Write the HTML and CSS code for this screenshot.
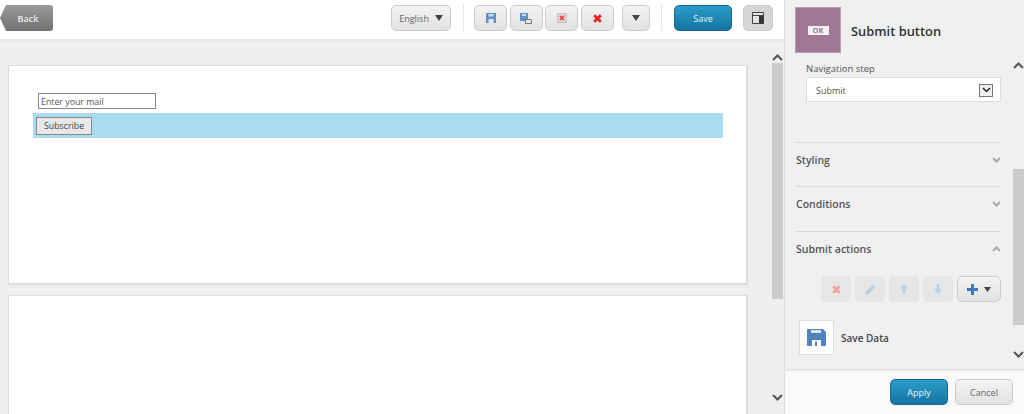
FILE: index.html
```html
<!DOCTYPE html>
<html lang="en">
<head>
<meta charset="utf-8">
<title>Submit button</title>
<link rel="stylesheet" href="styles.css">
</head>
<body>
<div class="app">
  <main class="main">
    <header class="toolbar">
      <button class="back">Back</button>
      <div class="tools">
        <button class="btn lang">English <svg class="caret" width="8" height="6" viewBox="0 0 8 6"><path d="M0 0h8L4 6z" fill="#444"/></svg></button>
        <span class="sep sep-a"></span>
        <div class="group">
          <button class="btn icon w33"><svg width="10" height="10" viewBox="0 0 10 10"><path d="M0 0h10v10H0z" fill="#5f90c8"/><path d="M2.500 1h5v2.500h-5z" fill="#cfdcea"/><path d="M2.500 6h5v4h-5z" fill="#e4e8ec"/></svg></button>
          <button class="btn icon w33"><svg width="12" height="11" viewBox="0 0 12 11"><path d="M0 0h8v8H0z" fill="#5f90c8"/><path d="M2 1h4v2H2z" fill="#cfdcea"/><path d="M5.500 6.500h6v4h-6z" fill="#e6e6e6" stroke="#7b7b7b"/></svg></button>
          <button class="btn icon w33"><svg width="10" height="10" viewBox="0 0 10 10"><path d="M.5.500h9v9h-9z" fill="#dcd6d6" stroke="#aaa" stroke-dasharray="1 1"/><path d="M3 3l4 4m0-4L3 7" stroke="#e33" stroke-width="1.500"/></svg></button>
          <button class="btn icon w33"><svg width="9" height="9" viewBox="0 0 9 9"><path d="M1.200 1.200l6.600 6.600m0-6.600L1.200 7.800" stroke="#ea2020" stroke-width="2.800"/></svg></button>
        </div>
        <button class="btn icon more"><svg width="8" height="6" viewBox="0 0 8 6"><path d="M0 0h8L4 6z" fill="#444"/></svg></button>
        <span class="sep sep-b"></span>
        <button class="btn primary save">Save</button>
        <button class="btn icon toggle"><svg width="12" height="12" viewBox="0 0 12 12"><path d="M.5.500h11v11H.5z" fill="#e4e4e4" stroke="#444"/><path d="M1 3.500h10" stroke="#444"/><path d="M7 4h4.500v7.500H7z" fill="#333"/></svg></button>
      </div>
    </header>
    <div class="canvas">
      <div class="pages">
        <section class="page first">
          <div class="form">
            <div class="field"><input class="mail" value="Enter your mail" readonly></div>
            <div class="selected"><button class="subscribe">Subscribe</button></div>
          </div>
        </section>
        <section class="page second"></section>
      </div>
      <div class="scroll main-scroll">
        <svg class="arrow" width="11" height="7" viewBox="0 0 11 7"><path d="M1 6l4.500-4.500L10 6" fill="none" stroke="#555" stroke-width="2"/></svg>
        <div class="thumb main-thumb"></div>
        <svg class="arrow end" width="11" height="7" viewBox="0 0 11 7"><path d="M1 1l4.500 4.500L10 1" fill="none" stroke="#555" stroke-width="2"/></svg>
      </div>
    </div>
  </main>
  <aside class="panel">
    <div class="panel-head">
      <div class="tile-ok"><span class="ok">OK</span></div>
      <h1 class="title">Submit button</h1>
    </div>
    <div class="panel-body">
      <div class="props">
        <label class="lbl">Navigation step</label>
        <div class="select"><span>Submit</span><span class="drop"><svg width="9" height="6" viewBox="0 0 9 6"><path d="M1 1l3.500 3.500L8 1" fill="none" stroke="#222" stroke-width="1.500"/></svg></span></div>
        <div class="sect s-style"><span>Styling</span><svg width="9" height="6" viewBox="0 0 9 6"><path d="M1 1l3.500 3.500L8 1" fill="none" stroke="#aaa" stroke-width="2"/></svg></div>
        <div class="sect s-cond"><span>Conditions</span><svg width="9" height="6" viewBox="0 0 9 6"><path d="M1 1l3.500 3.500L8 1" fill="none" stroke="#aaa" stroke-width="2"/></svg></div>
        <div class="sect s-sub"><span>Submit actions</span><svg width="9" height="6" viewBox="0 0 9 6"><path d="M1 5l3.500-3.500L8 5" fill="none" stroke="#aaa" stroke-width="2"/></svg></div>
        <div class="actions">
          <button class="act"><svg width="9" height="9" viewBox="0 0 9 9"><path d="M1.200 1.200l6.600 6.600m0-6.600L1.200 7.800" stroke="#f0a4a0" stroke-width="2.800"/></svg></button>
          <button class="act"><svg width="11" height="11" viewBox="0 0 11 11"><path d="M0 11l1-3.500L7.500.5 10.500 3.500 3.500 10z" fill="#b9d0e4"/></svg></button>
          <button class="act"><svg width="8" height="10" viewBox="0 0 8 10"><path d="M4 0l4 4.500H5.300V10H2.700V4.500H0z" fill="#b9d0e4"/></svg></button>
          <button class="act"><svg width="8" height="10" viewBox="0 0 8 10"><path d="M4 10l4-4.500H5.300V0H2.700v5.500H0z" fill="#b9d0e4"/></svg></button>
          <button class="btn add"><svg width="11" height="11" viewBox="0 0 11 11"><path d="M4 0h3v4h4v3H7v4H4V7H0V4h4z" fill="#3e78b5"/></svg><svg width="7" height="5" viewBox="0 0 7 5"><path d="M0 0h7L3.500 5z" fill="#444"/></svg></button>
        </div>
        <div class="item">
          <div class="item-ico"><svg width="19" height="17" viewBox="0 0 19 17"><path d="M1 0h15l3 3v13a1 1 0 0 1-1 1H1a1 1 0 0 1-1-1V1a1 1 0 0 1 1-1z" fill="#4f83c0"/><path d="M4 1h10v3H4z" fill="#dbe5f0"/><path d="M5 11h9v6H5z" fill="#fff"/><path d="M8 12.500h2V17H8z" fill="#4f83c0"/></svg></div>
          <span class="item-name">Save Data</span>
        </div>
      </div>
      <div class="scroll panel-scroll">
        <svg class="arrow" width="11" height="7" viewBox="0 0 11 7"><path d="M1 6l4.500-4.500L10 6" fill="none" stroke="#555" stroke-width="2"/></svg>
        <div class="thumb panel-thumb"></div>
        <svg class="arrow end" width="11" height="7" viewBox="0 0 11 7"><path d="M1 1l4.500 4.500L10 1" fill="none" stroke="#555" stroke-width="2"/></svg>
      </div>
    </div>
    <footer class="panel-foot">
      <button class="btn primary foot-btn">Apply</button>
      <button class="btn foot-btn">Cancel</button>
    </footer>
  </aside>
</div>
</body>
</html>
```
FILE: styles.css
```css
* { box-sizing: border-box; }
html, body { margin: 0; height: 414px; overflow: hidden; }
body { font-family: "Open Sans", sans-serif; color: #333; background: #efefef; }
button { font-family: inherit; padding: 0; }
.app { display: flex; width: 1024px; height: 414px; }
.main { width: 785px; display: flex; flex-direction: column; border-right: 1px solid #dcdcdc; }
.toolbar { height: 41px; flex: none; background: #fff; border-bottom: 2px solid #e8e8e8; display: flex; justify-content: space-between; padding: 5px 11px 0 0; }
.back { width: 53px; height: 26px; border: 0; border-radius: 0 3px 3px 0; background: linear-gradient(#9a9a9a, #727272); color: #e8e8e8; font-size: 9px; font-weight: 600; padding-left: 3px; clip-path: polygon(6px 0, 100% 0, 100% 100%, 6px 100%, 0 50%); }
.tools { display: flex; align-items: flex-start; }
.btn { height: 26px; border: 1px solid #ccc; border-radius: 5px; background: linear-gradient(#f3f3f3, #e2e2e2); color: #666; font-size: 9px; display: flex; align-items: center; justify-content: center; }
.lang { width: 60px; gap: 6px; }
.sep { width: 1px; height: 26px; background: #e6e6e6; }
.sep-a { margin: 0 10px 0 12px; }
.sep-b { margin: 0 12px 0 11px; }
.group { display: flex; gap: 2.670px; margin-right: 8px; }
.w33 { width: 33px; }
.more { width: 28px; }
.primary { background: linear-gradient(#2b9ccb, #15749f); border-color: #14688f; color: #e8f4fa; }
.save { width: 58px; }
.toggle { width: 30px; margin-left: 11px; background: #d6d6d6; border-color: #cbcbcb; }
.canvas { flex: 1; min-height: 0; display: flex; }
.pages { flex: 1; padding: 24px 24px 0 8px; display: flex; flex-direction: column; gap: 10px; overflow: hidden; }
.page { background: #fff; border: 1px solid #ddd; border-bottom-width: 2px; border-right-width: 2px; flex: none; width: 740px; }
.first { height: 220px; padding: 27px 24px 0 24px; }
.second { height: 130px; }
.form { display: flex; flex-direction: column; }
.field { padding-left: 5px; height: 20px; }
.mail { width: 118px; height: 16px; border: 1px solid #888; padding: 1px 2px 0; font: 8.800px "Open Sans", sans-serif; color: #555; display: block; outline: 0; }
.selected { background: #abdbf0; height: 25px; width: 690px; padding: 4px 3px 0; }
.subscribe { width: 56px; height: 18px; background: #e8e8e8; border: 1px solid #888; font-size: 8.800px; color: #444; display: block; }
.scroll { width: 12px; flex: none; display: flex; flex-direction: column; align-items: center; }
.main-scroll { margin-right: 1px; padding-top: 13px; padding-bottom: 13px; }
.thumb { width: 11px; background: #cbcbcb; }
.main-thumb { height: 236px; margin-top: 2px; }
.arrow { flex: none; }
.end { margin-top: auto; }
.panel { flex: 1; display: flex; flex-direction: column; background: #f0f0f0; position: relative; }
.panel-head { height: 60px; flex: none; padding: 7px 0 0 10px; display: flex; align-items: flex-start; gap: 10px; }
.tile-ok { width: 46px; height: 46px; background: #a07797; border: 1px solid #b89cb2; display: flex; align-items: center; justify-content: center; }
.ok { background: #f2f2f2; color: #a07797; font-size: 7.500px; font-weight: 700; width: 21px; height: 9px; line-height: 9px; text-align: center; }
.title { font-size: 12.900px; font-weight: 600; color: #333; margin: 15px 0 0; }
.panel-body { flex: 1; min-height: 0; display: flex; overflow: hidden; }
.props { width: 227px; flex: none; padding: 0 0 0 10px; }
.lbl { display: block; font-size: 9.500px; color: #555; margin: 2px 0 0 11px; line-height: 13px; }
.select { margin: 2px 0 0 11px; width: 195px; height: 25px; background: #fff; border: 1px solid #ddd; display: flex; align-items: center; justify-content: space-between; padding: 1px 7px 0 9px; font-size: 9px; color: #555; }
.drop { width: 14px; height: 13px; border: 1px solid #777; background: #eee; display: flex; align-items: center; justify-content: center; }
.sect { width: 206px; height: 45px; border-top: 1px solid #d9d9d9; display: flex; justify-content: space-between; align-items: center; padding: 0 0 10px 1px; font-size: 10.500px; font-weight: 600; color: #555; }
.s-style { margin-top: 40px; height: 44px; }
.s-cond { height: 45px; padding-bottom: 11px; }
.actions { width: 206px; display: flex; justify-content: flex-end; gap: 4px; margin-top: 0; height: 26px; }
.act { width: 30px; height: 26px; border: 0; border-radius: 4px; background: #e6e6e6; display: flex; align-items: center; justify-content: center; }
.add { width: 44px; gap: 6px; margin-right: 0; }
.item { display: flex; align-items: center; gap: 7px; margin: 18px 0 0 4px; }
.item-ico { width: 35px; height: 35px; background: #fff; border: 1px solid #ddd; display: flex; align-items: center; justify-content: center; }
.item-name { font-size: 10px; font-weight: 600; color: #444; }
.panel-scroll { margin-left: auto; margin-right: 0; padding: 2px 0 11px; }
.panel-thumb { height: 156px; margin-top: 100px; }
.panel-foot { height: 45px; flex: none; background: #fafafa; border-top: 2px solid #e4e4e4; display: flex; justify-content: flex-end; gap: 7px; padding: 8px 11px 0 0; }
.foot-btn { width: 58px; }
```
